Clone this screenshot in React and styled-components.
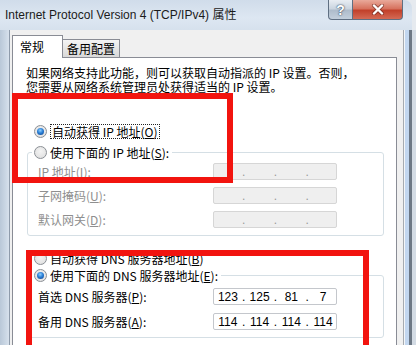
import styled, { createGlobalStyle } from "styled-components";

const GlobalStyle = createGlobalStyle`
  html, body {
    margin: 0;
    padding: 0;
  }
  body {
    width: 416px;
    height: 345px;
    overflow: hidden;
    background: #e6eaef;
    font-family: "Noto Sans CJK SC", "Liberation Sans", sans-serif;
  }
`;

const Window = styled.div`
  position: relative;
  width: 416px;
  height: 345px;
  display: flex;
  flex-direction: column;
  overflow: hidden;
`;

const TitleBar = styled.div`
  height: 30px;
  flex-shrink: 0;
  display: flex;
  align-items: flex-start;
  background: linear-gradient(180deg, #d0dcea 0%, #dde7f2 60%, #d6e1ed 100%);
  border-top-right-radius: 8px;
  margin-right: 4px;
`;

const Title = styled.div`
  padding-left: 5px;
  line-height: 30px;
  font-family: "Liberation Sans", "Noto Sans CJK SC", sans-serif;
  font-size: 12px;
  color: #1b1b1b;
  white-space: nowrap;
`;

const CaptionButtons = styled.div`
  display: flex;
  margin-left: auto;
  margin-right: 9px;
`;

const CaptionButton = styled.div`
  height: 20px;
  width: ${({ $close }) => ($close ? "50px" : "25px")};
  box-sizing: border-box;
  display: flex;
  align-items: center;
  justify-content: center;
  border: 1px solid #5f6f82;
  border-top: none;
  border-left: ${({ $close }) => ($close ? "none" : "1px solid #5f6f82")};
  border-radius: ${({ $close }) => ($close ? "0 0 4px 0" : "0 0 0 4px")};
  background: ${({ $close }) =>
    $close
      ? "linear-gradient(180deg, #e9a99a 0%, #d7735f 45%, #c2412b 55%, #d46a55 100%)"
      : "linear-gradient(180deg, #e8edf3 0%, #cbd5e0 45%, #aebccb 55%, #c3cfdc 100%)"};
  color: #fff;
  font-family: "Liberation Sans", sans-serif;
  font-weight: bold;
  font-size: 14px;
  text-shadow: 0 0 2px #33445a, 0 0 1px #33445a;
`;

const Body = styled.div`
  flex: 1;
  display: flex;
  min-height: 0;
`;

const LeftFrame = styled.div`
  width: 9px;
  background: linear-gradient(90deg, #b9c8d8 0%, #cdd9e6 70%, #d8e2ed 100%);
  border-right: 1px solid #8e9bab;
`;

const RightFrame = styled.div`
  width: 13px;
  background: linear-gradient(
    90deg,
    #a7abb0 0 1px,
    #f4f6f8 1px 2px,
    #c3d7ef 2px 6px,
    #6c7784 6px 9px,
    #d3dbe4 9px
  );
`;

const Dialog = styled.div`
  flex: 1;
  display: flex;
  flex-direction: column;
  background: #f0f0f0;
  padding: 5px 6px 0 2px;
  min-width: 0;
`;

const Tabs = styled.div`
  display: flex;
  align-items: flex-end;
  height: 23px;
  margin-bottom: -1px;
  position: relative;
  z-index: 1;
`;

const Tab = styled.div`
  box-sizing: border-box;
  height: ${({ $active }) => ($active ? "23px" : "19px")};
  padding: ${({ $active }) => ($active ? "0 7px" : "0 4px")};
  min-width: ${({ $active }) => ($active ? "51px" : "57px")};
  margin-left: ${({ $active }) => ($active ? "0" : "-1px")};
  border: 1px solid #898c95;
  border-bottom: ${({ $active }) => ($active ? "none" : "1px solid #898c95")};
  background: ${({ $active }) =>
    $active ? "#fff" : "linear-gradient(180deg, #f4f4f4 0%, #e6e6e6 50%, #d9d9d9 100%)"};
  position: relative;
  z-index: ${({ $active }) => ($active ? 2 : 1)};
  font-size: 12px;
  line-height: ${({ $active }) => ($active ? "22px" : "18px")};
  color: #000;
  white-space: nowrap;
`;

const Panel = styled.div`
  flex: 1;
  background: #fff;
  border: 1px solid #898c95;
  border-bottom: none;
  padding: 8px 12px 0 14px;
  display: flex;
  flex-direction: column;
`;

const Description = styled.p`
  margin: 0 0 0 -1px;
  font-size: 12px;
  line-height: 14px;
  color: #000;
  white-space: nowrap;

  span {
    display: block;
  }
`;

const RadioRow = styled.div`
  display: flex;
  align-items: center;
  gap: 3px;
  height: 16px;
  font-size: 12px;
  color: #000;
  white-space: nowrap;
  margin-left: ${({ $inset }) => ($inset ? "7px" : "0")};
  margin-top: ${({ $mt }) => $mt || 0}px;
`;

const RadioDot = styled.span`
  width: 13px;
  height: 13px;
  box-sizing: border-box;
  border-radius: 50%;
  border: 1px solid #8b8f95;
  background: radial-gradient(circle at 50% 40%, #f4f4f4 0%, #dcdcdc 100%);
  display: flex;
  align-items: center;
  justify-content: center;
  flex-shrink: 0;

  &::after {
    content: "";
    display: ${({ $checked }) => ($checked ? "block" : "none")};
    width: 7px;
    height: 7px;
    border-radius: 50%;
    background: radial-gradient(circle at 45% 35%, #8fd0ff 0%, #2a7fd6 45%, #0f3f85 100%);
  }
`;

const FocusLabel = styled.span`
  border: 1px dotted #222;
  padding: 0 1px;
  line-height: 13px;
`;

const GroupBox = styled.fieldset`
  margin: ${({ $mt }) => $mt || 0}px 0 0 0;
  padding: ${({ $pt }) => $pt}px 11px ${({ $pb }) => $pb}px 10px;
  border: 1px solid #d5dfe5;
  border-radius: 3px;
  min-width: 0;
`;

const Legend = styled.legend`
  padding: 0 3px 0 2px;
  margin-left: -6px;
  float: none;
`;

const Fields = styled.div`
  display: flex;
  flex-direction: column;
  gap: ${({ $gap }) => $gap}px;
`;

const FieldRow = styled.div`
  display: grid;
  grid-template-columns: 175px 124px;
  align-items: center;
`;

const FieldLabel = styled.span`
  font-size: 12px;
  color: ${({ $disabled }) => ($disabled ? "#8f8f8f" : "#000")};
  white-space: nowrap;
`;

const IpBox = styled.div`
  height: 17px;
  box-sizing: border-box;
  display: flex;
  align-items: center;
  padding-left: 1px;
  border: 1px solid ${({ $disabled }) => ($disabled ? "#d6d6d6" : "#c4c7cc")};
  border-radius: 2px;
  background: ${({ $disabled }) => ($disabled ? "#efefef" : "#fff")};
  font-family: "Liberation Sans", sans-serif;
  font-size: 12px;
  color: ${({ $disabled }) => ($disabled ? "#9a9a9a" : "#000")};
`;

const Octet = styled.span`
  width: 26px;
  text-align: center;
`;

const Sep = styled.span`
  width: 6px;
  text-align: center;
`;

const Annotation = styled.div`
  position: absolute;
  left: ${({ $x }) => $x}px;
  top: ${({ $y }) => $y}px;
  width: ${({ $w }) => $w}px;
  height: ${({ $h }) => $h}px;
  box-sizing: border-box;
  border: 6px solid #f2140f;
  pointer-events: none;
`;

function IpField({ value, disabled }) {
  const parts = value ? value.split(".") : ["", "", "", ""];
  return (
    <IpBox $disabled={disabled}>
      {parts.map((p, i) => (
        <span key={i} style={{ display: "contents" }}>
          <Octet>{p}</Octet>
          {i < 3 && <Sep>.</Sep>}
        </span>
      ))}
    </IpBox>
  );
}

function Radio({ checked, children, inset, mt, focus }) {
  return (
    <RadioRow $inset={inset} $mt={mt}>
      <RadioDot $checked={checked} />
      {focus ? <FocusLabel>{children}</FocusLabel> : <span>{children}</span>}
    </RadioRow>
  );
}

function CloseGlyph() {
  return (
    <svg width="14" height="11" viewBox="0 0 14 11">
      <path d="M3 1.5 L11 9.5 M11 1.5 L3 9.5" stroke="#5a2018" strokeWidth="4" strokeLinecap="round" opacity="0.55" />
      <path d="M3 1.5 L11 9.5 M11 1.5 L3 9.5" stroke="#fff" strokeWidth="2.4" strokeLinecap="round" />
    </svg>
  );
}

export default function App() {
  return (
    <>
      <GlobalStyle />
      <Window>
        <TitleBar>
          <Title>Internet Protocol Version 4 (TCP/IPv4) 属性</Title>
          <CaptionButtons>
            <CaptionButton>?</CaptionButton>
            <CaptionButton $close>
              <CloseGlyph />
            </CaptionButton>
          </CaptionButtons>
        </TitleBar>
        <Body>
          <LeftFrame />
          <Dialog>
            <Tabs>
              <Tab $active>常规</Tab>
              <Tab>备用配置</Tab>
            </Tabs>
            <Panel>
              <Description>
                <span>如果网络支持此功能，则可以获取自动指派的 IP 设置。否则，</span>
                <span>您需要从网络系统管理员处获得适当的 IP 设置。</span>
              </Description>

              <Radio checked inset mt={29} focus>
                自动获得 IP 地址(<u>O</u>)
              </Radio>

              <GroupBox $mt={5} $pt={3} $pb={7}>
                <Legend>
                  <Radio>使用下面的 IP 地址(<u>S</u>):</Radio>
                </Legend>
                <Fields $gap={7}>
                  <FieldRow>
                    <FieldLabel $disabled>IP 地址(<u>I</u>):</FieldLabel>
                    <IpField disabled />
                  </FieldRow>
                  <FieldRow>
                    <FieldLabel $disabled>子网掩码(<u>U</u>):</FieldLabel>
                    <IpField disabled />
                  </FieldRow>
                  <FieldRow>
                    <FieldLabel $disabled>默认网关(<u>D</u>):</FieldLabel>
                    <IpField disabled />
                  </FieldRow>
                </Fields>
              </GroupBox>

              <Radio inset mt={14}>
                自动获得 DNS 服务器地址(<u>B</u>)
              </Radio>

              <GroupBox $mt={1} $pt={5} $pb={7}>
                <Legend>
                  <Radio checked>
                    使用下面的 DNS 服务器地址(<u>E</u>):
                  </Radio>
                </Legend>
                <Fields $gap={8}>
                  <FieldRow>
                    <FieldLabel>首选 DNS 服务器(<u>P</u>):</FieldLabel>
                    <IpField value="123.125.81.7" />
                  </FieldRow>
                  <FieldRow>
                    <FieldLabel>备用 DNS 服务器(<u>A</u>):</FieldLabel>
                    <IpField value="114.114.114.114" />
                  </FieldRow>
                </Fields>
              </GroupBox>
            </Panel>
          </Dialog>
          <RightFrame />
        </Body>

        <Annotation $x={12} $y={93} $w={221} $h={90} />
        <Annotation $x={26} $y={250} $w={343} $h={110} />
      </Window>
    </>
  );
}
